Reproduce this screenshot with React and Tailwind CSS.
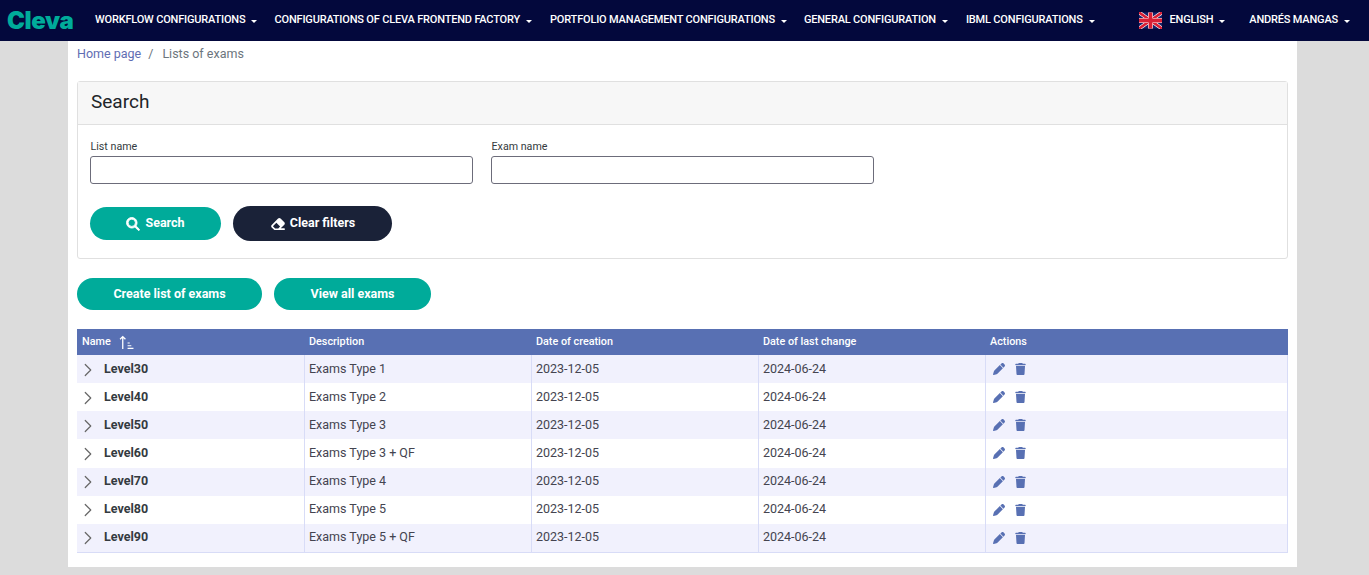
import { ChevronRight } from "lucide-react";

const navItems = [
    "WORKFLOW CONFIGURATIONS",
    "CONFIGURATIONS OF CLEVA FRONTEND FACTORY",
    "PORTFOLIO MANAGEMENT CONFIGURATIONS",
    "GENERAL CONFIGURATION",
    "IBML CONFIGURATIONS",
];

const exams = [
    { name: "Level30", description: "Exams Type 1" },
    { name: "Level40", description: "Exams Type 2" },
    { name: "Level50", description: "Exams Type 3" },
    { name: "Level60", description: "Exams Type 3 + QF" },
    { name: "Level70", description: "Exams Type 4" },
    { name: "Level80", description: "Exams Type 5" },
    { name: "Level90", description: "Exams Type 5 + QF" },
];

const columns = "grid grid-cols-[227px_227px_227px_227px_1fr]";

function Caret() {
    return <span className="ml-[6px] mt-[2px] inline-block border-x-[3.5px] border-t-[3.5px] border-x-transparent border-t-white" />;
}

function NavItem({ label, className }) {
    return (
        <div className={`flex shrink-0 items-center whitespace-nowrap text-[11px] font-medium tracking-[-0.18px] text-white ${className}`}>
            {label}
            <Caret />
        </div>
    );
}

function UkFlag() {
    return (
        <svg width="23" height="17" viewBox="0 0 60 42" className="mr-[7px] shrink-0">
            <rect width="60" height="42" fill="#14246b" />
            <path d="M0 0L60 42M60 0L0 42" stroke="#fff" strokeWidth="10" />
            <path d="M0 0L60 42M60 0L0 42" stroke="#d81f35" strokeWidth="7" />
            <path d="M30 0V42M0 21H60" stroke="#fff" strokeWidth="13" />
            <path d="M30 0V42M0 21H60" stroke="#d81f35" strokeWidth="10" />
        </svg>
    );
}

function SearchIcon() {
    return (
        <svg width="14" height="14" viewBox="-20 -20 552 552" fill="#fff" stroke="#fff" strokeWidth="34">
            <path d="M416 208c0 45.900-14.900 88.300-40 122.700L502.600 457.400c12.500 12.500 12.500 32.800 0 45.300s-32.800 12.500-45.300 0L330.700 376c-34.400 25.200-76.800 40-122.700 40C93.100 416 0 322.900 0 208S93.100 0 208 0S416 93.100 416 208zM208 352a144 144 0 1 0 0-288 144 144 0 1 0 0 288z" />
        </svg>
    );
}

function EraserIcon() {
    return (
        <svg width="16" height="14" viewBox="0 0 576 512" fill="#fff">
            <path d="M290.700 57.400L57.400 290.700c-25 25-25 65.500 0 90.500l80 80c12 12 28.300 18.700 45.300 18.700H288h9.400H512c17.700 0 32-14.300 32-32s-14.300-32-32-32H387.900L518.600 285.300c25-25 25-65.500 0-90.500L381.300 57.400c-25-25-65.500-25-90.500 0zM297.400 416H288l-105.400 0-80-80L227.300 211.300 364.700 348.700 297.400 416z" />
        </svg>
    );
}

function PencilIcon() {
    return (
        <svg width="12" height="12" viewBox="0 0 512 512" fill="#5870b3">
            <path d="M362.700 19.300L314.300 67.700 444.300 197.700l48.400-48.400c25-25 25-65.500 0-90.500L453.300 19.300c-25-25-65.500-25-90.500 0zm-71 71L58.600 323.500c-10.400 10.400-18 23.300-22.200 37.400L1 481.200C-1.500 489.700 .8 498.800 7 505s15.300 8.500 23.700 6.100l120.300-35.400c14.100-4.200 27-11.800 37.400-22.200L421.700 220.300 291.700 90.300z" />
        </svg>
    );
}

function TrashIcon() {
    return (
        <svg width="11" height="12" viewBox="0 0 448 512" fill="#5870b3">
            <path d="M135.200 17.700L128 32H32C14.300 32 0 46.300 0 64S14.300 96 32 96H416c17.700 0 32-14.300 32-32s-14.300-32-32-32H320l-7.200-14.300C307.400 6.800 296.300 0 284.200 0H163.800c-12.100 0-23.200 6.800-28.600 17.700zM416 128H32L53.200 467c1.600 25.300 22.600 45 47.900 45H346.900c25.300 0 46.300-19.700 47.900-45L416 128z" />
        </svg>
    );
}

function SortIcon() {
    return (
        <svg width="15" height="15" viewBox="0 0 14 14" className="ml-[8px]" fill="none" stroke="#fff">
            <path d="M3.500 13V1.500M1 4L3.500 1.500L6 4" strokeWidth="1.200" />
            <path d="M8 7.500H10M8 10H11.500M8 12.500H13.500" strokeWidth="1" />
        </svg>
    );
}

function Field({ label }) {
    return (
        <div className="w-[383px]">
            <div className="mb-[3px] ml-[0.5px] h-[14px] pt-px text-[10.700px] leading-[14px] text-[#343a40]">{label}</div>
            <input className="block h-[28px] w-full rounded-[3px] border border-[#6c6c7a] bg-white" />
        </div>
    );
}

export default function App() {
    return (
        <div className="h-[575px] overflow-hidden bg-[#dcdcdc] font-['Roboto',sans-serif]">
            <header className="flex h-[41px] items-center bg-[#03083c] pl-[7px]">
                <div className="w-[88px] shrink-0 text-[24px] font-black leading-none tracking-[-0.4px] text-[#00ab9a] font-['Inter',sans-serif]">
                    Cleva
                </div>
                <NavItem label={navItems[0]} className="mr-[17px]" />
                <NavItem label={navItems[1]} className="mr-[18px]" />
                <NavItem label={navItems[2]} className="mr-[17px]" />
                <NavItem label={navItems[3]} className="mr-[18px]" />
                <NavItem label={navItems[4]} />
                <div className="ml-auto flex items-center pr-[19px]">
                    <UkFlag />
                    <NavItem label="ENGLISH" className="mr-[24px]" />
                    <NavItem label="ANDRÉS MANGAS" />
                </div>
            </header>

            <main className="mx-[68px] mr-[72px] h-[526px] bg-white px-[9px]">
                <div className="flex h-[40px] items-start pt-[5px] text-[12.500px] leading-[16px]">
                    <span className="text-[#5f6db3]">Home page</span>
                    <span className="mx-[7px] text-[#6c757d]">/</span>
                    <span className="ml-[2px] text-[#6c757d]">Lists of exams</span>
                </div>

                <section className="h-[178px] rounded-[3px] border border-[#e0e0e0]">
                    <div className="flex h-[43px] items-center border-b border-[#e0e0e0] bg-[#f7f7f7] px-[13px] pb-[2px] text-[19px] text-[#212529]">
                        Search
                    </div>
                    <div className="px-[12px] pt-[14px]">
                        <div className="flex gap-[18px]">
                            <Field label="List name" />
                            <Field label="Exam name" />
                        </div>
                        <div className="mt-[22px] flex items-center gap-[12px]">
                            <button className="flex h-[33px] w-[131px] items-center justify-center gap-[5px] rounded-full bg-[#00ab9a] text-[12.500px] font-bold text-white">
                                <SearchIcon />
                                Search
                            </button>
                            <button className="flex h-[35px] w-[159px] items-center justify-center gap-[4px] rounded-full bg-[#1a2238] text-[12.500px] font-bold text-white">
                                <EraserIcon />
                                Clear filters
                            </button>
                        </div>
                    </div>
                </section>

                <div className="mt-[19px] flex gap-[12px]">
                    <button className="h-[32px] w-[185px] rounded-full bg-[#00ab9a] text-[12.500px] font-bold text-white">
                        Create list of exams
                    </button>
                    <button className="h-[32px] w-[157px] rounded-full bg-[#00ab9a] text-[12.500px] font-bold text-white">
                        View all exams
                    </button>
                </div>

                <div className="mt-[19px] border-x border-b border-[#d8dcf7]">
                    <div className={`${columns} -mx-px h-[26px] items-center bg-[#5870b3] text-[10.800px] font-medium text-white`}>
                        <div className="flex items-center pl-[5px]">
                            Name
                            <SortIcon />
                        </div>
                        <div className="pl-[5px]">Description</div>
                        <div className="pl-[5px]">Date of creation</div>
                        <div className="pl-[5px]">Date of last change</div>
                        <div className="pl-[5px]">Actions</div>
                    </div>
                    {exams.map((exam, i) => (
                        <div
                            key={exam.name}
                            className={`${columns} -ml-px h-[28.140px] text-[12.500px] text-[#444450] ${i % 2 === 0 ? "bg-[#f1f1fd]" : "bg-white"}`}
                        >
                            <div className="flex items-center">
                                <ChevronRight size={22} strokeWidth={1.300} className="mt-[1px] text-[#666]" />
                                <span className="ml-[5px] font-bold text-[#343a40]">{exam.name}</span>
                            </div>
                            <div className="flex items-center border-l border-[#d8dcf7] pl-[4px]">{exam.description}</div>
                            <div className="flex items-center border-l border-[#d8dcf7] pl-[4px]">2023-12-05</div>
                            <div className="flex items-center border-l border-[#d8dcf7] pl-[4px]">2024-06-24</div>
                            <div className="flex items-center gap-[10px] border-l border-[#d8dcf7] pl-[7px]">
                                <PencilIcon />
                                <TrashIcon />
                            </div>
                        </div>
                    ))}
                </div>
            </main>
        </div>
    );
}
